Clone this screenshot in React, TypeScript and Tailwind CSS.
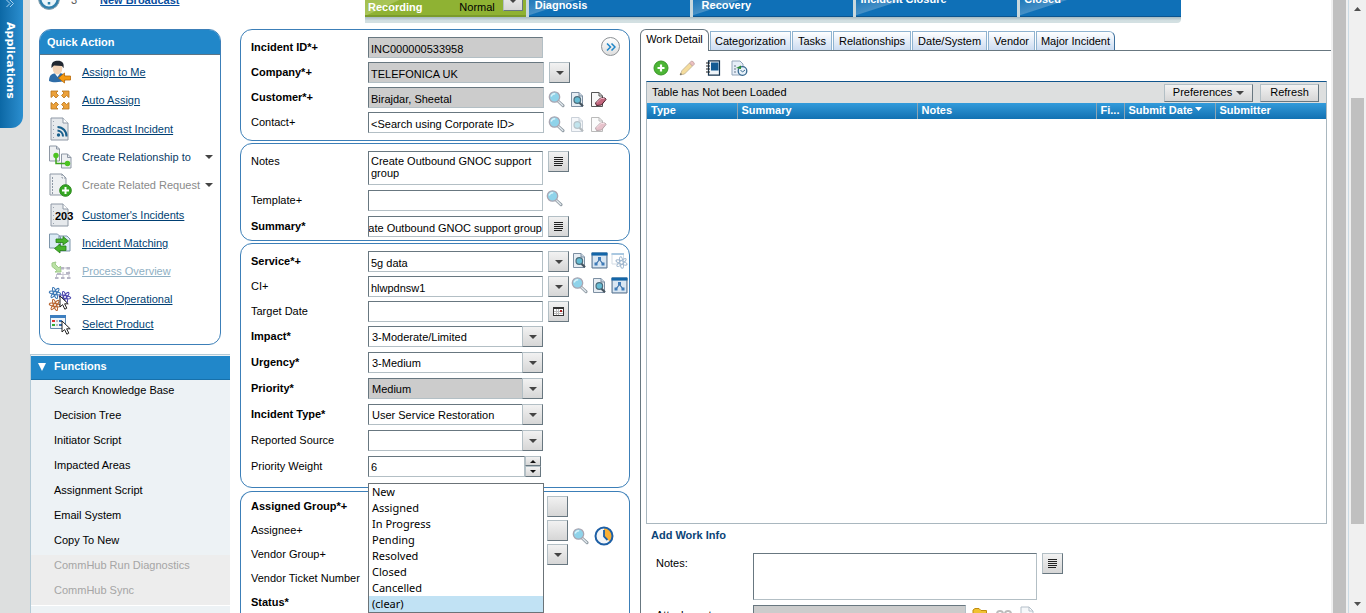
import React, { useState } from "react";

type Kids = { children?: React.ReactNode };

/* ---------- icons ---------- */

const Magnifier = () => (
  <svg viewBox="0 0 17 17" className="h-[17px] w-[17px]">
    <path d="M10 10l5 4.700" stroke="#8f9aa3" strokeWidth="3" strokeLinecap="round" />
    <path d="M10.300 10.200l4.500 4.300" stroke="#e6ecf1" strokeWidth="1.200" strokeLinecap="round" />
    <circle cx="6.500" cy="6" r="5.200" fill="#8fd3ea" stroke="#a9a6b2" strokeWidth="1.300" />
    <path d="M3.200 5.500a3.300 3.300 0 0 1 4-2.600" stroke="#d9f4fb" strokeWidth="1.500" fill="none" />
  </svg>
);

const DocSearch = ({ faded = false }: { faded?: boolean }) => (
  <svg viewBox="0 0 17 17" className={faded ? "h-[17px] w-[17px] opacity-40" : "h-[17px] w-[17px]"}>
    <path d="M2.500 1.500h7.500l3.500 3.500v10.500h-11z" fill="#e7edf3" stroke="#7d8fa2" />
    <path d="M10 1.500v3.500h3.500" fill="#c9d6e2" stroke="#7d8fa2" />
    <path d="M10.300 11.500l3.700 3.700" stroke="#46545f" strokeWidth="2.200" />
    <circle cx="8.300" cy="9" r="3.300" fill="#66bcd4" stroke="#4b6c7c" strokeWidth="1.200" />
  </svg>
);

const DocEraser = ({ faded = false }: { faded?: boolean }) => (
  <svg viewBox="0 0 17 17" className={faded ? "h-[17px] w-[17px] opacity-40" : "h-[17px] w-[17px]"}>
    <path d="M1.500 1.500h7.500l3.500 3.500v10.500h-11z" fill="#f7f7f7" stroke="#555" />
    <path d="M9 1.500v3.500h3.500" fill="none" stroke="#555" />
    <path d="M5.500 12l5-5h4.500l1 1.500-4.500 5.500-5 .5z" fill="#c4687f" stroke="#4a1b28" />
    <path d="M6.500 11.800l4.500-4.300h3.500" stroke="#e9aebd" fill="none" />
  </svg>
);

const Hierarchy = () => (
  <svg viewBox="0 0 17 17" className="h-[17px] w-[17px]">
    <path d="M1 1h15v15H1z" fill="#b9cde0" stroke="#59738e" />
    <path d="M2 4h13v11H2z" fill="#d9e6f2" />
    <path d="M.500 .500h16v3H.500z" fill="#1265a8" />
    <path d="M8.500 7.500L5 12M8.500 7.500l3.500 4.500" stroke="#3a6ea5" strokeWidth="1.200" />
    <path d="M7 5h3v3H7zM3.500 10.500h3v3h-3zM10.500 10.500h3v3h-3z" fill="#3f7bb8" />
  </svg>
);

const AtomWindow = () => (
  <svg viewBox="0 0 17 17" className="h-[17px] w-[17px] opacity-50">
    <path d="M1 1.500h11.500v10.500H1z" fill="#fff" stroke="#a9bccd" />
    <path d="M.5 1h12.500v2H.5z" fill="#5793c4" />
    <g fill="none" stroke="#45719f">
      <ellipse cx="10.500" cy="10.500" rx="5.800" ry="1.700" transform="rotate(20 10.500 10.500)" />
      <ellipse cx="10.500" cy="10.500" rx="5.800" ry="1.700" transform="rotate(80 10.500 10.500)" />
      <ellipse cx="10.500" cy="10.500" rx="5.800" ry="1.700" transform="rotate(140 10.500 10.500)" />
    </g>
  </svg>
);

const Lines = () => (
  <svg viewBox="0 0 9 9" className="h-[9px] w-[9px]" shapeRendering="crispEdges">
    <path d="M0 0h9v1H0zM0 2h9v1H0zM0 4h9v1H0zM0 6h9v1H0zM0 8h8v1H0z" fill="#222" />
  </svg>
);

const Down = () => (
  <svg viewBox="0 0 8 4" className="h-1 w-2">
    <path d="M0 0h8L4 4z" fill="#444" />
  </svg>
);

const CalendarIcon = () => (
  <svg viewBox="0 0 11 9" className="h-[9px] w-[11px]" shapeRendering="crispEdges">
    <path d="M0 0h11v9H0z" fill="#333" />
    <path d="M1 2h9v6H1z" fill="#fff" />
    <path d="M3 2h1v6H3zM5 2h1v6H5zM1 4h9v1H1zM1 6h9v1H1z" fill="#bbb" />
    <path d="M7 3h2v2H7z" fill="#a22" />
  </svg>
);

const ClockIcon = () => (
  <svg viewBox="0 0 20 20" className="h-5 w-5">
    <circle cx="10" cy="10" r="8.500" fill="#f4f6f8" />
    <path d="M10 2a8 8 0 0 1 5.800 13.500L10 10z" fill="#fbb034" />
    <circle cx="10" cy="10" r="8.500" fill="none" stroke="#1d5fa5" strokeWidth="2" />
    <path d="M10 4v6.500l3.500 3.500" stroke="#1d5fa5" strokeWidth="1.800" fill="none" />
  </svg>
);

const NotePage = () => (
  <>
    <path d="M3 1h12l5 5v17H3z" fill="#e6e9ec" stroke="#8e98a5" />
    <path d="M15 1v5h5" fill="#fff" stroke="#8e98a5" />
    <path d="M5.500 4v18" stroke="#9aa4b0" strokeDasharray="1 3" />
  </>
);

const Cursor = ({ x, y }: { x: number; y: number }) => (
  <path
    transform={`translate(${x} ${y})`}
    d="M0 0v11l2.600-2.400 2.200 4.600 2-1-2.200-4.400h3.600z"
    fill="#fff"
    stroke="#222"
    strokeWidth="1"
  />
);

const atom = (x: number, y: number, c: string) => (
  <g fill="none" stroke={c} strokeWidth="1.100" transform={`translate(${x} ${y})`}>
    <ellipse rx="5.800" ry="1.500" transform="rotate(10)" />
    <ellipse rx="5.800" ry="1.500" transform="rotate(70)" />
    <ellipse rx="5.800" ry="1.500" transform="rotate(130)" />
  </g>
);

const actionIcons: Record<string, React.ReactNode> = {
  assign: (
    <>
      <path d="M1 21c0-6 3-8 9-8s8 2 8 7c-5 2.500-13 3-17 1z" fill="#2f6da8" />
      <path d="M6.500 13l3 4 3-4z" fill="#fff" />
      <ellipse cx="9.500" cy="8.500" rx="4.800" ry="6" fill="#f3d3b6" />
      <path d="M3.500 8C3 2 6 .8 10 .8s6.500 2 5.500 7.500L14 6 6 5.500z" fill="#222831" />
      <path d="M22.500 16v4h-6v3l-6-5 6-5v3z" fill="#f59a12" stroke="#b9690b" strokeWidth=".8" />
    </>
  ),
  auto: (
    <g fill="#eca13a" stroke="#b8731b" strokeWidth=".8">
      <path d="M3 3h7L8 5l2.500 2.500-2.500 2.500L5.500 7.500l-2.500 2z" />
      <path d="M21 3h-7l2 2-2.500 2.500L16 10l2.500-2.500 2.500 2z" />
      <path d="M3 21h7l-2-2 2.500-2.500L8 14l-2.500 2.500-2.500-2z" />
      <path d="M21 21h-7l2-2-2.500-2.500L16 14l2.500 2.500 2.500-2z" />
    </g>
  ),
  broadcast: (
    <>
      <NotePage />
      <circle cx="10.500" cy="18" r="1.700" fill="#175f8c" />
      <path d="M9.500 13.500a6 6 0 0 1 5.500 6M9.500 10a9 9 0 0 1 9 9.500" fill="none" stroke="#175f8c" strokeWidth="2" />
    </>
  ),
  relation: (
    <>
      <path d="M1.500 1h7l3 3v12h-10zM13.500 9h6l3.500 3.500V23h-9.500z" fill="#eef0f2" stroke="#8e98a5" />
      <path d="M8.500 1v3h3M19.500 9v3.500H23" fill="none" stroke="#8e98a5" />
      <path d="M8 10v8.500h11" fill="none" stroke="#3ca51c" strokeWidth="1.500" />
      <circle cx="8" cy="10.500" r="2.700" fill="#4cc321" />
      <circle cx="19.500" cy="18.500" r="2.700" fill="#4cc321" />
    </>
  ),
  request: (
    <>
      <path d="M2 1h12l4 4v17H2z" fill="#eef0f2" stroke="#8e98a5" />
      <path d="M14 1v4h4M4.500 4v18" fill="none" stroke="#8e98a5" strokeDasharray="2 1" />
      <circle cx="17.500" cy="17.500" r="5.800" fill="#35a822" stroke="#28851a" />
      <path d="M17.500 14v7M14 17.500h7" stroke="#fff" strokeWidth="2" />
    </>
  ),
  matching: (
    <>
      <path d="M1.500 3h8l3 3v11h-11zM11 5h8l3 3v12H11z" fill="#dcebf5" stroke="#7d95aa" />
      <path d="M8 8h7V5.500l5.500 4.500L15 14v-2.500H8z" fill="#48b42c" stroke="#257d16" strokeWidth=".8" />
      <path d="M18 15h-6v-2l-5.500 4.500L12 22v-2.500h6z" fill="#48b42c" stroke="#257d16" strokeWidth=".8" />
    </>
  ),
  process: (
    <g opacity=".6">
      <path d="M4 4l4-1-1 2 4 4 1.500-2 .5 6H7l2-1.500-5-4z" fill="#8fcf6a" stroke="#5fa83c" />
      <path d="M14 9h8M9 15.500h12M8.500 15v4M15 13v6M21 12v7" stroke="#a3a0b5" />
      <path d="M13 8h3v2.500h-3zM18.500 8h3.500v2.500h-3.500zM7 18h3.500v2H7zM13 18h3.500v2H13zM19 18h3.500v2H19zM9 14h4v2H9zM18 13h4v2h-4z" fill="#8884a0" />
    </g>
  ),
  operational: (
    <>
      {atom(7, 6, "#3d78b5")}
      {atom(17, 10, "#4c47ae")}
      {atom(7, 18, "#b96632")}
      <Cursor x={12} y={9} />
    </>
  ),
  product: (
    <>
      <path d="M2.500 3.500h15v13h-15z" fill="#f1f6fb" stroke="#658bb0" />
      <path d="M2 3h16v3H2z" fill="#3d7fc0" />
      <path d="M4 8h3v2H4z" fill="#d33" />
      <path d="M4 12h3v2H4z" fill="#3a3" />
      <path d="M11 8h3v2h-3zM11 12h3v2h-3z" fill="#3973b4" />
      <path d="M8 9h2M8 13h2" stroke="#888" />
      <Cursor x={14} y={9} />
    </>
  ),
};

/* ---------- form pieces ---------- */

const inset = "border border-t-[#687780] border-l-[#687780] border-r-[#b3bfc5] border-b-[#b3bfc5]";
const raised =
  "flex shrink-0 items-center justify-center border border-t-[#b3bfc5] border-l-[#b3bfc5] border-r-[#687780] border-b-[#687780] bg-linear-to-b from-[#f2f2f2] to-[#d6d6d6]";

function Panel({ children }: Kids) {
  return <section className="rounded-xl border border-[#3c7fb8] bg-white pt-[7px] pb-[7px] pl-2.5">{children}</section>;
}

function Row({ id, label, bold, h, children }: { id: string; label: string; bold?: boolean; h: string; children?: React.ReactNode }) {
  return (
    <div className={`flex items-start ${h}`}>
      <label htmlFor={id} className={`w-[117px] shrink-0 pt-[3px] leading-[14px] whitespace-nowrap ${bold ? "font-bold" : ""}`}>
        {label}
      </label>
      {children}
    </div>
  );
}

function Field({ id, value = "", readOnly, wide }: { id: string; value?: string; readOnly?: boolean; wide?: boolean }) {
  return (
    <input
      id={id}
      defaultValue={value}
      readOnly={readOnly}
      className={`h-[21px] shrink-0 px-0.5 pt-0.5 outline-none ${inset} ${wide ? "w-[176px]" : "w-[175px]"} ${readOnly ? "bg-[#cccccc]" : "bg-white"}`}
    />
  );
}

function Square({ label, children }: { label: string; children?: React.ReactNode }) {
  return (
    <button type="button" aria-label={label} className={`ml-[5px] h-[21px] w-[21px] ${raised}`}>
      {children}
    </button>
  );
}

function IconBtn({ label, children }: { label: string; children: React.ReactNode }) {
  return (
    <button type="button" aria-label={label} className="h-[17px] w-[17px] shrink-0">
      {children}
    </button>
  );
}

function Choice({ id, value, grey }: { id: string; value: string; grey?: boolean }) {
  return (
    <div className="relative w-[175px] shrink-0">
      <select
        id={id}
        defaultValue={value}
        className={`block h-[21px] w-full appearance-none pt-px pl-[3px] outline-none ${inset} ${grey ? "bg-[#cccccc]" : "bg-white"}`}
      >
        <option value={value}>{value}</option>
      </select>
      <span className={`pointer-events-none absolute top-0 right-0 h-[21px] w-[21px] ${raised}`}>
        <Down />
      </span>
    </div>
  );
}

/* ---------- page parts ---------- */

const actions: { icon: string; label: string; kind?: "menu" | "off" | "faded"; h: string }[] = [
  { icon: "assign", label: "Assign to Me", h: "h-7" },
  { icon: "auto", label: "Auto Assign", h: "h-7" },
  { icon: "broadcast", label: "Broadcast Incident", h: "h-[30px]" },
  { icon: "relation", label: "Create Relationship to", kind: "menu", h: "h-[26px]" },
  { icon: "request", label: "Create Related Request", kind: "off", h: "h-[30px]" },
  { icon: "203", label: "Customer's Incidents", h: "h-[30px]" },
  { icon: "matching", label: "Incident Matching", h: "h-[26px]" },
  { icon: "process", label: "Process Overview", kind: "faded", h: "h-[30px]" },
  { icon: "operational", label: "Select Operational", h: "h-[26px]" },
  { icon: "product", label: "Select Product", h: "h-6" },
];

function ActionIcon({ name }: { name: string }) {
  if (name === "203") {
    return (
      <span className="relative block h-6 w-6">
        <svg viewBox="0 0 24 24" className="h-6 w-6">
          <NotePage />
        </svg>
        <span className="absolute top-1.5 left-[7px] leading-[14px] font-bold">203</span>
      </span>
    );
  }
  return (
    <svg viewBox="0 0 24 24" className="h-6 w-6">
      {actionIcons[name]}
    </svg>
  );
}

function QuickAction() {
  return (
    <section className="ml-[9px] h-[316px] w-[182px] overflow-hidden rounded-xl border border-[#3c7fb8]">
      <h2 className="flex h-[25px] items-center border-b border-[#5d7585] bg-[#2187c9] pl-[7px] font-bold text-white">Quick Action</h2>
      <ul className="pt-[3px]">
        {actions.map((a) => (
          <li key={a.label} className={`flex items-center pl-2 ${a.h}`}>
            <ActionIcon name={a.icon} />
            {a.kind === "menu" || a.kind === "off" ? (
              <button
                type="button"
                className={`ml-2.5 flex flex-1 items-center justify-between pr-[7px] whitespace-nowrap ${a.kind === "off" ? "text-[#8a8a8a]" : "text-[#0b3c66]"}`}
              >
                {a.label}
                <Down />
              </button>
            ) : (
              <a href="#" className={`ml-2.5 whitespace-nowrap underline underline-offset-1 ${a.kind === "faded" ? "text-[#8fb0c4]" : "text-[#003f73]"}`}>
                {a.label}
              </a>
            )}
          </li>
        ))}
      </ul>
    </section>
  );
}

const functions = ["Search Knowledge Base", "Decision Tree", "Initiator Script", "Impacted Areas", "Assignment Script", "Email System", "Copy To New"];

function Functions() {
  return (
    <nav className="mt-[9px] flex-1 border-t border-l border-[#b4cad6] bg-[#edf2f5]">
      <h2 className="mt-px flex h-6 items-center border-b border-[#1770aa] bg-[#2187c9] pb-0.5 font-bold text-white">
        <svg viewBox="0 0 8 8" className="mr-2 ml-[7px] h-2 w-2">
          <path d="M0 0h8L4 8z" fill="#fff" />
        </svg>
        Functions
      </h2>
      {functions.map((f) => (
        <a key={f} href="#" className="block h-[25px] pl-[23px] leading-5">
          {f}
        </a>
      ))}
      <div className="border-b border-white bg-[#ededed] text-[#a5a5a5]">
        {["CommHub Run Diagnostics", "CommHub Sync"].map((f) => (
          <a key={f} href="#" className="block h-[25px] pl-[23px] leading-5">
            {f}
          </a>
        ))}
      </div>
    </nav>
  );
}

const stages = [
  { name: "Diagnosis", pad: "pb-1 pl-1.5" },
  { name: "Recovery", pad: "pb-1 pl-[9px]" },
  { name: "Incident Closure", pad: "pb-2.5 pl-1" },
  { name: "Closed", pad: "pb-2.5 pl-1" },
];

function Stages() {
  return (
    <div className="ml-[125px] h-[29px] w-[816px]">
      <div className="h-[23px] rounded-br bg-linear-to-b from-[#a9bcc4] from-75% to-[#d3e0e2] to-90%">
        <ol className="grid h-[17px] grid-cols-5 gap-[3px] overflow-hidden bg-[#c9d8dd] font-bold text-white">
          <li className="flex items-end overflow-hidden border-b-2 border-[#7b9b2b] bg-[linear-gradient(155deg,#a3c04f_0px,#a9c558_14px,#8fb233_15px)] pr-[3px] pl-[3px]">
            <span className="flex-1 pb-px leading-[14px]">Recording</span>
            <span className="mr-2 pb-px leading-[14px] font-normal text-black">Normal</span>
            <span className="pb-1">
              <button type="button" aria-label="Stage menu" className={`h-5 w-5 ${raised}`}>
                <Down />
              </button>
            </span>
          </li>
          {stages.map((s) => (
            <li
              key={s.name}
              className="flex items-end overflow-hidden border-b border-[#0b548f] bg-[linear-gradient(162deg,#2079ba_0px,#4690c6_14px,#0f70b7_15px)]"
            >
              <span className={`leading-[14px] ${s.pad}`}>{s.name}</span>
            </li>
          ))}
        </ol>
      </div>
    </div>
  );
}

const statuses = ["New", "Assigned", "In Progress", "Pending", "Resolved", "Closed", "Cancelled", "(clear)"];

function IncidentForm() {
  const [status, setStatus] = useState("(clear)");
  return (
    <form className="flex w-[390px] shrink-0 flex-col">
      <div className="mb-0.5">
        <Panel>
          <Row id="incident" label="Incident ID*+" bold h="h-[25px]">
            <Field id="incident" value="INC000000533958" readOnly />
            <button
              type="button"
              aria-label="Expand"
              className="ml-[58px] flex h-[19px] w-[19px] items-center justify-center rounded-full border border-[#8d9296] bg-linear-to-b from-white to-[#dedede]"
            >
              <svg viewBox="0 0 10 8" className="h-2 w-2.5">
                <path d="M1 .5L4.500 4 1 7.500M5.500 .5L9 4 5.500 7.500" stroke="#1f86c8" strokeWidth="1.500" fill="none" />
              </svg>
            </button>
          </Row>
          <Row id="company" label="Company*+" bold h="h-[25px]">
            <Field id="company" value="TELEFONICA UK" readOnly wide />
            <Square label="Company menu">
              <Down />
            </Square>
          </Row>
          <Row id="customer" label="Customer*+" bold h="h-[25px]">
            <Field id="customer" value="Birajdar, Sheetal" readOnly wide />
            <div className="flex gap-1 pt-1 pl-1">
              <IconBtn label="Search customer"><Magnifier /></IconBtn>
              <IconBtn label="View customer"><DocSearch /></IconBtn>
              <IconBtn label="Clear customer"><DocEraser /></IconBtn>
            </div>
          </Row>
          <Row id="contact" label="Contact+" h="h-[21px]">
            <Field id="contact" value="<Search using Corporate ID>" wide />
            <div className="flex gap-1 pt-1 pl-1">
              <IconBtn label="Search contact"><Magnifier /></IconBtn>
              <IconBtn label="View contact"><DocSearch faded /></IconBtn>
              <IconBtn label="Clear contact"><DocEraser faded /></IconBtn>
            </div>
          </Row>
        </Panel>
      </div>

      <div className="mb-0.5">
        <section className="rounded-xl border border-[#3c7fb8] bg-white pt-[7px] pb-[3px] pl-2.5">
          <Row id="notes" label="Notes" h="h-[39px]">
            <textarea
              id="notes"
              defaultValue="Create Outbound GNOC support group"
              className={`h-[34px] w-[175px] shrink-0 resize-none overflow-hidden px-0.5 pt-[3px] leading-3 outline-none ${inset}`}
            />
            <Square label="Expand notes"><Lines /></Square>
          </Row>
          <Row id="template" label="Template+" h="h-[26px]">
            <Field id="template" />
            <span className="pl-[3px]">
              <IconBtn label="Search template"><Magnifier /></IconBtn>
            </span>
          </Row>
          <Row id="summary" label="Summary*" bold h="h-[21px]">
            <input
              id="summary"
              dir="rtl"
              defaultValue="Create Outbound GNOC support group"
              className={`h-[21px] w-[175px] shrink-0 pt-0.5 outline-none ${inset}`}
            />
            <Square label="Expand summary"><Lines /></Square>
          </Row>
        </section>
      </div>

      <div className="mb-[3px]">
        <section className="rounded-xl border border-[#3c7fb8] bg-white pt-[7px] pb-2.5 pl-2.5">
          <Row id="service" label="Service*+" bold h="h-[25px]">
            <Field id="service" value="5g data" />
            <Square label="Service menu"><Down /></Square>
            <div className="flex gap-[3px] pt-px pl-0.5">
              <IconBtn label="View service"><DocSearch /></IconBtn>
              <IconBtn label="Service relations"><Hierarchy /></IconBtn>
              <IconBtn label="Service impact"><AtomWindow /></IconBtn>
            </div>
          </Row>
          <Row id="ci" label="CI+" h="h-[25px]">
            <Field id="ci" value="hlwpdnsw1" />
            <Square label="CI menu"><Down /></Square>
            <div className="flex gap-[3px] pt-px pl-0.5">
              <IconBtn label="Search CI"><Magnifier /></IconBtn>
              <IconBtn label="View CI"><DocSearch /></IconBtn>
              <IconBtn label="CI relations"><Hierarchy /></IconBtn>
            </div>
          </Row>
          <Row id="target" label="Target Date" h="h-[25px]">
            <Field id="target" />
            <Square label="Pick date"><CalendarIcon /></Square>
          </Row>
          <Row id="impact" label="Impact*" bold h="h-[26px]"><Choice id="impact" value="3-Moderate/Limited" /></Row>
          <Row id="urgency" label="Urgency*" bold h="h-[26px]"><Choice id="urgency" value="3-Medium" /></Row>
          <Row id="priority" label="Priority*" bold h="h-[26px]"><Choice id="priority" value="Medium" grey /></Row>
          <Row id="type" label="Incident Type*" bold h="h-[26px]"><Choice id="type" value="User Service Restoration" /></Row>
          <Row id="source" label="Reported Source" h="h-[26px]"><Choice id="source" value="" /></Row>
          <Row id="weight" label="Priority Weight" h="h-[21px]">
            <input id="weight" defaultValue="6" className={`h-[21px] w-[157px] shrink-0 px-0.5 pt-px outline-none ${inset}`} />
            <div className="flex w-4 flex-col">
              <button type="button" aria-label="Increase" className={`h-[10px] ${raised}`}>
                <svg viewBox="0 0 6 3" className="h-[3px] w-1.5"><path d="M0 3h6L3 0z" fill="#111" /></svg>
              </button>
              <button type="button" aria-label="Decrease" className={`h-[11px] ${raised}`}>
                <svg viewBox="0 0 6 3" className="h-[3px] w-1.5"><path d="M0 0h6L3 3z" fill="#111" /></svg>
              </button>
            </div>
          </Row>
        </section>
      </div>

      <section className="relative flex-1 rounded-t-xl border border-b-0 border-[#3c7fb8] bg-white pt-1 pl-2.5">
        <div className="flex">
          <div className="w-[296px] pt-[3px]">
            {["Assigned Group*+", "Assignee+", "Vendor Group+", "Vendor Ticket Number"].map((l, i) => (
              <div key={l} className={`h-6 leading-[14px] ${i === 0 ? "font-bold" : ""}`}>{l}</div>
            ))}
            <div id="status-label" className="h-6 leading-[14px] font-bold">Status*</div>
          </div>
          <div className="flex flex-col gap-[3px]">
            <button type="button" aria-label="Assigned group menu" className={`h-[21px] w-[21px] ${raised}`} />
            <button type="button" aria-label="Assignee menu" className={`h-[21px] w-[21px] ${raised}`} />
            <button type="button" aria-label="Vendor group menu" className={`h-[21px] w-[21px] ${raised}`}><Down /></button>
          </div>
          <div className="flex items-center gap-[5px] self-start pt-[30px] pl-1">
            <IconBtn label="Search assignee"><Magnifier /></IconBtn>
            <button type="button" aria-label="Assignment history"><ClockIcon /></button>
          </div>
        </div>
        <ul
          role="listbox"
          aria-labelledby="status-label"
          className="absolute -top-[9px] left-[127px] w-[176px] border border-[#6b7378] bg-white font-['Noto_Sans',sans-serif] text-[11px] leading-4"
        >
          {statuses.map((s) => (
            <li
              key={s}
              role="option"
              aria-selected={s === status}
              onClick={() => setStatus(s)}
              className={`h-4 pl-[3px] ${s === status ? "bg-[#c1e2f4]" : ""}`}
            >
              {s}
            </li>
          ))}
        </ul>
      </section>
    </form>
  );
}

const tabs = ["Categorization", "Tasks", "Relationships", "Date/System", "Vendor", "Major Incident"];
const columns = [
  { name: "Type", w: "w-[90px]" },
  { name: "Summary", w: "w-[180px]" },
  { name: "Notes", w: "w-[179px]" },
  { name: "Fi...", w: "w-[28px]" },
  { name: "Submit Date", w: "w-[91px]" },
  { name: "Submitter", w: "" },
];

function WorkDetail() {
  return (
    <section className="ml-2.5 flex min-w-0 flex-1 flex-col">
      <div role="tablist" className="flex h-[22px] items-end">
        <button type="button" role="tab" aria-selected className="h-[22px] w-[69px] rounded-t-md border border-b-0 border-[#687780] bg-white pb-0.5">
          Work Detail
        </button>
        <div className="flex h-5 flex-1 gap-px border-b border-[#687780] pl-px">
          {tabs.map((t) => (
            <button
              key={t}
              type="button"
              role="tab"
              aria-selected={false}
              className="border border-b-0 border-[#8fb3d0] bg-linear-to-b from-white to-[#ccdcf1] px-[5px] whitespace-nowrap first:px-1 last:rounded-tr-md last:border-r-[#3c6f9c] last:px-1"
            >
              {t}
            </button>
          ))}
        </div>
      </div>
      <div className="flex flex-1 flex-col border-l border-[#687780] pr-1 pl-[5px]">
        <div className="flex h-[30px] items-center gap-2.5 pt-1 pl-[7px]">
          <button type="button" aria-label="Add">
            <svg viewBox="0 0 16 16" className="h-4 w-4">
              <circle cx="8" cy="8" r="7" fill="#4cb535" stroke="#3a9528" />
              <path d="M8 4.500v7M4.500 8h7" stroke="#fff" strokeWidth="2.200" />
            </svg>
          </button>
          <button type="button" aria-label="Edit">
            <svg viewBox="0 0 16 16" className="h-4 w-4">
              <path d="M1 15l2-4.500 7.500-7.500 3 3-8 8z" fill="#f5dc9c" stroke="#bdae90" strokeWidth=".8" />
              <path d="M10.500 3l2-2q2 0 3 3l-2 2z" fill="#ecc0c0" stroke="#bfa0a0" strokeWidth=".8" />
              <path d="M1 15l.8-2 1.200 1.200z" fill="#555" />
            </svg>
          </button>
          <button type="button" aria-label="View log">
            <svg viewBox="0 0 16 16" className="h-4 w-4">
              <path d="M3.500 .8h11v14.400h-11z" fill="#eef4f9" stroke="#14334f" strokeWidth="1.200" />
              <path d="M6 2.500h7.500v8H6z" fill="#125a92" />
              <path d="M1 3h4M1 6h4M1 9h4M1 12h4" stroke="#222" strokeWidth="1.200" />
            </svg>
          </button>
          <button type="button" aria-label="Report">
            <svg viewBox="0 0 17 17" className="h-[17px] w-[17px]">
              <path d="M1 1h8l3 3v11H1z" fill="#e6eef8" stroke="#91a4b8" />
              <path d="M3 6h2M3 9h2M3 12h2" stroke="#678" strokeWidth="1.200" />
              <circle cx="11.500" cy="11" r="4.300" fill="#e8f2fa" stroke="#37688f" strokeWidth="1.300" />
              <path d="M9.500 10l2 2 2.500-2" stroke="#37688f" fill="none" />
              <path d="M5 8l5-2.500V9z" fill="#2c8c33" />
            </svg>
          </button>
        </div>
        <div className="h-[443px] border border-[#a9b7bf] border-t-[#10558c]">
          <div className="flex h-[21px] items-center gap-[7px] bg-[#dddfdf] pr-[7px] pl-[5px]">
            <span className="flex-1">Table has Not been Loaded</span>
            <button type="button" className={`h-[18px] w-[89px] gap-1 ${raised}`}>
              Preferences
              <Down />
            </button>
            <button type="button" className={`h-[18px] w-[59px] ${raised}`}>Refresh</button>
          </div>
          <table className="w-full table-fixed border-collapse">
            <thead>
              <tr className="h-4 bg-linear-to-b from-[#329bdb] to-[#1171b2] text-left text-white">
                {columns.map((c) => (
                  <th key={c.name} scope="col" className={`overflow-hidden border-r border-[#8ea5b3] pb-0.5 pl-1 leading-[14px] whitespace-nowrap last:border-r-0 ${c.w}`}>
                    {c.name}
                    {c.name === "Submit Date" && (
                      <svg viewBox="0 0 7 4" className="mb-1 ml-0.5 inline h-1 w-[7px]">
                        <path d="M0 0h7L3.500 4z" fill="#fff" />
                      </svg>
                    )}
                  </th>
                ))}
              </tr>
            </thead>
            <tbody />
          </table>
        </div>
        <h3 className="mt-[3px] pl-[5px] leading-4 font-bold text-[#0b4477]">Add Work Info</h3>
        <div className="mt-2.5 flex pl-2.5">
          <label htmlFor="work-notes" className="w-[97px] pt-[3px] leading-[14px]">Notes:</label>
          <textarea id="work-notes" className={`h-[47px] w-[284px] resize-none outline-none ${inset}`} />
          <Square label="Expand work notes"><Lines /></Square>
        </div>
        <div className="mt-[5px] flex pl-2.5">
          <label htmlFor="attachment" className="w-[97px] pt-[3px] leading-[14px]">Attachment:</label>
          <input id="attachment" readOnly className={`h-[21px] w-[213px] bg-[#cccccc] ${inset}`} />
          <div className="flex gap-2 pt-[3px] pl-1.5">
            <svg viewBox="0 0 16 14" className="h-3.5 w-4"><path d="M1 2l2-1.500h4L9 2.500h5.500V13H1z" fill="#f1c232" stroke="#c08d10" /></svg>
            <svg viewBox="0 0 16 14" className="h-3.5 w-4"><path d="M1 6a3 3 0 0 1 6 0M9 6a3 3 0 0 1 6 0" fill="none" stroke="#bbb" strokeWidth="2" /></svg>
            <svg viewBox="0 0 14 16" className="-mt-0.5 h-4 w-3.5"><path d="M1 1h8l4 4v10H1zM9 1v4h4" fill="#f6f8fa" stroke="#b4bfc9" /></svg>
          </div>
        </div>
      </div>
    </section>
  );
}

export default function App() {
  return (
    <div className="flex h-screen overflow-hidden bg-white font-['Liberation_Sans',Arial,sans-serif] text-[11px] text-black">
      <aside className="w-[30px] shrink-0 bg-[#dddfdf]">
        <button
          type="button"
          className="flex h-32 w-[23px] flex-col items-center rounded-br-xl bg-linear-to-r from-[#0b68a5] to-[#2b8fd0] pr-1 text-white"
        >
          <svg viewBox="0 0 8 7" className="h-[7px] w-2">
            <path d="M.5 0L4 3.500.5 7M4 0l3.500 3.500L4 7" stroke="#a9d2ee" fill="none" />
          </svg>
          <span className="mt-[15px] font-['DejaVu_Sans',Verdana,sans-serif] text-[11px] leading-3 font-bold [writing-mode:vertical-rl]">Applications</span>
        </button>
      </aside>

      <div className="flex w-[200px] shrink-0 flex-col">
        <div className="mb-[19px] flex h-2.5 items-end overflow-hidden pl-2">
          <svg viewBox="0 0 22 22" className="h-[22px] w-[22px]">
            <circle cx="11" cy="11" r="9" fill="#eaf5fa" stroke="#2f7fac" strokeWidth="3" />
            <circle cx="11" cy="11" r="10.400" fill="none" stroke="#8ba2ae" />
            <path d="M11 5v7M11 14v2.500" stroke="#2a82ac" strokeWidth="2.500" />
          </svg>
          <span className="w-[29px] pb-[3px] pl-[11px] leading-[14px] text-[#555]">3</span>
          <a href="#" className="ml-[11px] pb-[3px] leading-[14px] font-bold whitespace-nowrap text-[#0a4fa0] underline">New Broadcast</a>
        </div>
        <QuickAction />
        <Functions />
      </div>

      <main className="ml-2.5 flex min-w-0 flex-1 flex-col">
        <Stages />
        <div className="flex min-h-0 flex-1">
          <IncidentForm />
          <WorkDetail />
        </div>
      </main>

      <div className="flex w-[35px] shrink-0">
        <div className="w-0.5 bg-[#f0f0f0]" />
        <div className="w-[13px] bg-[#c0c0c0]" />
        <div className="w-0.5 bg-[#f0f0f0]" />
        <div className="flex flex-1 flex-col items-center border-l border-[#cbdbe5] bg-[#f0f0f0]">
          <svg viewBox="0 0 7 4" className="mt-[7px] h-1 w-[7px] shrink-0"><path d="M0 4h7L3.500 0z" fill="#505050" /></svg>
          <div className="mt-[87px] mb-[78px] w-[13px] flex-1 bg-[#c0c0c0]" />
          <svg viewBox="0 0 7 4" className="mb-[7px] h-1 w-[7px] shrink-0"><path d="M0 0h7L3.500 4z" fill="#505050" /></svg>
        </div>
      </div>
    </div>
  );
}
